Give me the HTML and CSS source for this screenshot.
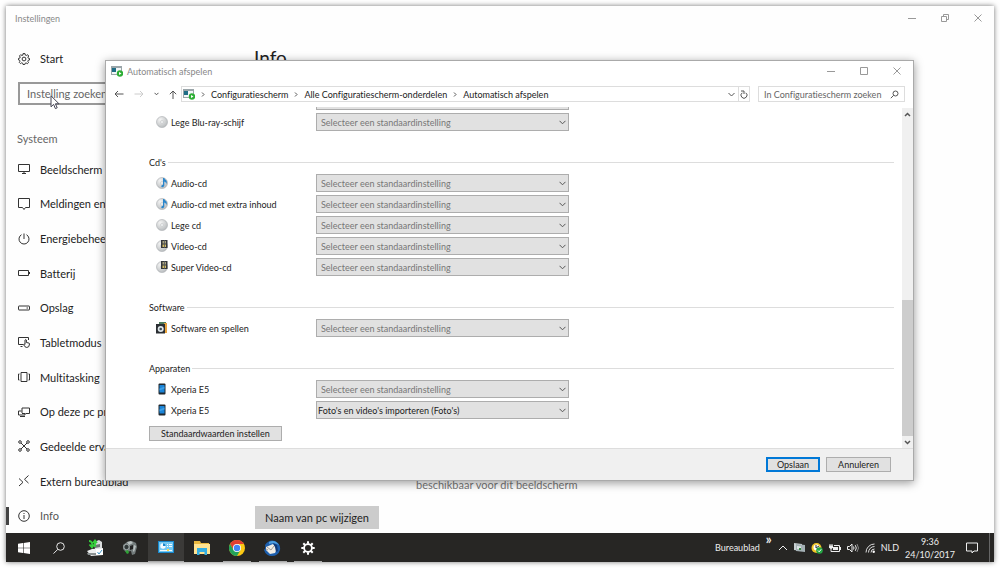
FILE: index.html
```html
<!DOCTYPE html>
<html lang="nl">
<head>
  <meta charset="UTF-8">
  <meta name="viewport" content="width=device-width, initial-scale=1.0">
  <title>Instellingen</title>
  <link rel="stylesheet" href="styles.css">
</head>
<body>
  <div class="screen">
    <div class="settings">
      <header class="settings-title">
        <span>Instellingen</span>
        <div class="window-buttons">
          <button aria-label="Minimaliseren"><svg width="8" height="8" viewBox="0 0 8 8"><path d="M0 4.5h8"/></svg></button>
          <button aria-label="Verkleinen"><svg width="8" height="8" viewBox="0 0 8 8"><path d="M.5 2.5h5v5h-5zM2.5 2.5v-2h5v5h-2"/></svg></button>
          <button aria-label="Sluiten"><svg width="8" height="8" viewBox="0 0 8 8"><path d="M.5.5l7 7M7.500.5l-7 7"/></svg></button>
        </div>
      </header>

      <div class="settings-body">
        <aside class="sidebar">
          <a class="nav-item home" href="#">
            <svg width="12" height="12" viewBox="0 0 12 12"><circle cx="6" cy="6" r="1.900"/><path d="M5 .6h2l.3 1.500 1 .4 1.300-.8 1.100 1.300-.8 1.200.4 1 1.200.3v1.500l-1.300.3-.4 1 .7 1.300-1.200 1.100-1.200-.8-1 .4-.3 1.200H5l-.3-1.300-1-.4-1.200.8-1.200-1.200.7-1.200-.4-1L.5 6.900V5.400l1.300-.3.4-1-.7-1.200 1.200-1.200 1.200.8 1-.4z"/></svg>
            <span>Start</span>
          </a>
          <input class="search" type="text" placeholder="Instelling zoeken" aria-label="Instelling zoeken">
          <h2>Systeem</h2>
          <nav class="nav">
            <a class="nav-item" href="#">
              <svg width="12" height="12" viewBox="0 0 12 12"><path d="M.5 1.500h11v7H.5zM6 8.500v2M4 10.500h4"/></svg>
              <span>Beeldscherm</span>
            </a>
            <a class="nav-item" href="#">
              <svg width="12" height="12" viewBox="0 0 12 12"><path d="M.5.5h11v9H7.500L6 11.500 4.500 9.500h-4z"/></svg>
              <span>Meldingen en acties</span>
            </a>
            <a class="nav-item" href="#">
              <svg width="12" height="12" viewBox="0 0 12 12"><path d="M6 .5V6M3.500 1.700a5 5 0 1 0 5 0"/></svg>
              <span>Energiebeheer</span>
            </a>
            <a class="nav-item" href="#">
              <svg width="12" height="12" viewBox="0 0 12 12"><path d="M.5 3.500h10v5H.5zM11.500 5v2"/></svg>
              <span>Batterij</span>
            </a>
            <a class="nav-item" href="#">
              <svg width="12" height="12" viewBox="0 0 12 12"><path d="M1 4h10q.5 0 .5.500v3q0 .5-.5.500H1q-.5 0-.5-.5v-3Q.5 4 1 4zM8.500 6H10"/></svg>
              <span>Opslag</span>
            </a>
            <a class="nav-item" href="#">
              <svg width="12" height="12" viewBox="0 0 12 12"><path d="M5 8.500H.5v-7h10V4M2.500 10.500h2M7 8.500V4q.7-1 1.400 0v2.500l2.600.6q.5.100.5.900-.100 3.500-2.700 3.500-2 0-3.300-3Q6 7.500 7 8.500z"/></svg>
              <span>Tabletmodus</span>
            </a>
            <a class="nav-item" href="#">
              <svg width="12" height="12" viewBox="0 0 12 12"><path d="M3 1.500h6v9H3zM1.500 3h-1v6h1M10.500 3h1v6h-1"/></svg>
              <span>Multitasking</span>
            </a>
            <a class="nav-item" href="#">
              <svg width="12" height="12" viewBox="0 0 12 12"><path d="M4 7V2h7.500v5.500H7.500M.5 5h3M.5 5v4H7V7.500H4M2 10.500h5"/></svg>
              <span>Op deze pc projecteren</span>
            </a>
            <a class="nav-item" href="#">
              <svg width="12" height="12" viewBox="0 0 12 12"><path d="M3 3l6 6M9 3L3 9"/><circle cx="2" cy="2" r="1.300"/><circle cx="10" cy="2" r="1.300"/><circle cx="2" cy="10" r="1.300"/><circle cx="10" cy="10" r="1.300"/></svg>
              <span>Gedeelde ervaringen</span>
            </a>
            <a class="nav-item" href="#">
              <svg width="12" height="12" viewBox="0 0 12 12"><path d="M1 3.500L5 7.300 1 11M10.500.5L6.500 4.300l4 3.800"/></svg>
              <span>Extern bureaublad</span>
            </a>
            <a class="nav-item current" href="#">
              <svg width="12" height="12" viewBox="0 0 12 12"><circle cx="6" cy="6" r="5.300"/><path d="M6 5v4M6 3v1"/></svg>
              <span>Info</span>
            </a>
          </nav>
        </aside>

        <main class="page">
          <h1>Info</h1>
          <p>beschikbaar voor dit beeldscherm</p>
          <button class="rename">Naam van pc wijzigen</button>
        </main>
      </div>

      <svg class="cursor" width="10" height="15" viewBox="0 0 10 15"><path d="M1 .8v11l2.600-2.400 1.800 4.200 1.800-.8-1.800-4H9z"/></svg>
    </div>

    <section class="dialog">
      <header class="dialog-title">
        <svg width="12" height="11" viewBox="0 0 12 11"><use href="#autoplay"/></svg>
        <span>Automatisch afspelen</span>
        <div class="window-buttons">
          <button aria-label="Minimaliseren"><svg width="8" height="8" viewBox="0 0 8 8"><path d="M0 4.500h8"/></svg></button>
          <button aria-label="Maximaliseren"><svg width="8" height="8" viewBox="0 0 8 8"><path d="M.5.5h7v7h-7z"/></svg></button>
          <button aria-label="Sluiten"><svg width="8" height="8" viewBox="0 0 8 8"><path d="M.5.5l7 7M7.500.5l-7 7"/></svg></button>
        </div>
      </header>

      <div class="toolbar">
        <div class="history">
          <button aria-label="Vorige"><svg width="10" height="8" viewBox="0 0 10 8"><path d="M9.500 4H1M4 1L1 4l3 3"/></svg></button>
          <button class="off" aria-label="Volgende" disabled><svg width="10" height="8" viewBox="0 0 10 8"><path d="M.5 4H9M6 1l3 3-3 3"/></svg></button>
          <button class="recent" aria-label="Recente locaties"><svg width="5" height="4" viewBox="0 0 5 4"><path d="M.5.800l2 2 2-2"/></svg></button>
          <button aria-label="Omhoog"><svg width="8" height="9" viewBox="0 0 8 9"><path d="M4 9V1M.800 4.200L4 1l3.200 3.200"/></svg></button>
        </div>
        <div class="address">
          <svg class="place" width="12" height="11" viewBox="0 0 12 11"><use href="#autoplay"/></svg>
          <svg class="sep" width="4" height="5" viewBox="0 0 4 5"><path d="M1 .5l2 2-2 2"/></svg>
          <a href="#">Configuratiescherm</a>
          <svg class="sep" width="4" height="5" viewBox="0 0 4 5"><path d="M1 .5l2 2-2 2"/></svg>
          <a href="#">Alle Configuratiescherm-onderdelen</a>
          <svg class="sep" width="4" height="5" viewBox="0 0 4 5"><path d="M1 .5l2 2-2 2"/></svg>
          <a href="#">Automatisch afspelen</a>
          <div class="address-buttons">
            <button aria-label="Vorige locaties"><svg width="7" height="5" viewBox="0 0 7 5"><path d="M.5 1l3 3 3-3"/></svg></button>
            <button class="refresh" aria-label="Vernieuwen"><svg width="8" height="9" viewBox="0 0 8 9"><path d="M2.200 2.800a3 3 0 1 0 3.600 0M1 1h3v3"/></svg></button>
          </div>
        </div>
        <label class="find">
          <input type="text" placeholder="In Configuratiescherm zoeken" aria-label="In Configuratiescherm zoeken">
          <svg width="9" height="9" viewBox="0 0 9 9"><circle cx="5.500" cy="3.500" r="2.500"/><path d="M3.700 5.300L.8 8.200"/></svg>
        </label>
      </div>

      <div class="dialog-body">
        <div class="options">
          <div class="group">
            <div class="row">
              <select class="unset" aria-label="Blu-ray"><option></option></select>
            </div>
            <div class="row">
              <label for="bluray"><svg width="12" height="12" viewBox="0 0 12 12"><use href="#disc"/></svg>Lege Blu-ray-schijf</label>
              <select class="unset" id="bluray"><option>Selecteer een standaardinstelling</option></select>
            </div>
          </div>

          <div class="group">
            <h3>Cd's</h3>
            <div class="row">
              <label for="audio"><svg width="12" height="12" viewBox="0 0 12 12"><use href="#disc"/><use href="#note"/></svg>Audio-cd</label>
              <select class="unset" id="audio"><option>Selecteer een standaardinstelling</option></select>
            </div>
            <div class="row">
              <label for="audio-extra"><svg width="12" height="12" viewBox="0 0 12 12"><use href="#disc"/><use href="#note"/></svg>Audio-cd met extra inhoud</label>
              <select class="unset" id="audio-extra"><option>Selecteer een standaardinstelling</option></select>
            </div>
            <div class="row">
              <label for="blank"><svg width="12" height="12" viewBox="0 0 12 12"><use href="#disc"/></svg>Lege cd</label>
              <select class="unset" id="blank"><option>Selecteer een standaardinstelling</option></select>
            </div>
            <div class="row">
              <label for="video"><svg width="12" height="12" viewBox="0 0 12 12"><use href="#disc"/><use href="#film"/></svg>Video-cd</label>
              <select class="unset" id="video"><option>Selecteer een standaardinstelling</option></select>
            </div>
            <div class="row">
              <label for="super-video"><svg width="12" height="12" viewBox="0 0 12 12"><use href="#disc"/><use href="#film"/></svg>Super Video-cd</label>
              <select class="unset" id="super-video"><option>Selecteer een standaardinstelling</option></select>
            </div>
          </div>

          <div class="group">
            <h3>Software</h3>
            <div class="row">
              <label for="software"><svg width="12" height="12" viewBox="0 0 12 12"><path fill="#4d7a5c" d="M3 0h7v4H3z"/><path fill="#e8a33c" d="M8 1h3v10H8z"/><path fill="#2b2f33" d="M0 2h9v9.500H0z"/><circle cx="4.700" cy="7" r="3" fill="#dfe6ea"/><circle cx="4.700" cy="7" r="1.300" fill="#3d4a52"/></svg>Software en spellen</label>
              <select class="unset" id="software"><option>Selecteer een standaardinstelling</option></select>
            </div>
          </div>

          <div class="group">
            <h3>Apparaten</h3>
            <div class="row">
              <label for="xperia-1"><svg width="12" height="12" viewBox="0 0 12 12"><use href="#phone"/></svg>Xperia E5</label>
              <select class="unset" id="xperia-1"><option>Selecteer een standaardinstelling</option></select>
            </div>
            <div class="row">
              <label for="xperia-2"><svg width="12" height="12" viewBox="0 0 12 12"><use href="#phone"/></svg>Xperia E5</label>
              <select id="xperia-2"><option>Foto's en video's importeren (Foto's)</option></select>
            </div>
          </div>

          <button class="push defaults">Standaardwaarden instellen</button>
        </div>

        <div class="scrollbar">
          <button aria-label="Omhoog schuiven"><svg width="7" height="5" viewBox="0 0 7 5"><path d="M1 4l2.500-2.500L6 4"/></svg></button>
          <div class="track"><div class="thumb"></div></div>
          <button aria-label="Omlaag schuiven"><svg width="7" height="5" viewBox="0 0 7 5"><path d="M1 1l2.500 2.500L6 1"/></svg></button>
        </div>
      </div>

      <footer class="dialog-footer">
        <button class="push primary">Opslaan</button>
        <button class="push">Annuleren</button>
      </footer>
    </section>

    <footer class="taskbar">
      <div class="apps">
        <button aria-label="Start"><svg width="12" height="12" viewBox="0 0 12 12"><path fill="#fff" d="M0 1.700l5-.7v4.700H0zM5.600.900L12 0v5.700H5.600zM0 6.300h5V11l-5-.7zM5.600 6.300H12V12l-6.400-.9z"/></svg></button>
        <button aria-label="Zoeken"><svg width="12" height="12" viewBox="0 0 12 12"><g fill="none" stroke="#e8e8e8"><circle cx="7.500" cy="4.500" r="3.800"/><path d="M4.800 7.300L.5 11.600"/></g></svg></button>
        <button aria-label="Scanner"><svg width="18" height="18" viewBox="0 0 18 18"><path fill="#d9dcdc" d="M8 3l5-2 3 2v7H9z"/><path fill="#6d7474" d="M9 6l5-1v3l-5 1z"/><path fill="#eef0f0" d="M1 12l5-2 11-1v7l-12 1z"/><path fill="#8c9292" d="M1 14h9v2H2z"/><path fill="#fff" d="M10 10h7v6h-7z"/><path d="M11.500 13l1.500 2 3-4" fill="none" stroke="#4398c8"/><path d="M3 2q4 0 3 6M3.500 5.500L6 8.500l2-3M9 8V2M7 4l2-2.500L11 4" fill="none" stroke="#35cf3c" stroke-width="1.800"/></svg></button>
        <button aria-label="Camera"><svg width="16" height="16" viewBox="0 0 16 16"><path fill="#737b7b" d="M1 5l4-3 5-1 4 2 1 4-2 7-3 1-1-4-5 1-3-3z"/><path fill="#b9c0c0" d="M5 2l4-1 2 2-4 2zM12 5l2 1-2 6-1-1z"/><circle cx="4.500" cy="7" r="2.700" fill="#303737" stroke="#a5adad"/><path fill="#222" d="M8 6l3-1v4l-3 1z"/><path fill="#2fa336" d="M3 11l3-1 1 3-2 1z"/></svg></button>
        <button class="active" aria-label="Configuratiescherm"><svg width="16" height="12" viewBox="0 0 16 12"><path fill="#1787cc" d="M0 0h16v12H0z"/><path fill="#74c9f3" d="M1 1h14v10H1z"/><circle cx="5" cy="5" r="2.700" fill="#f5fbff"/><path fill="#1787cc" d="M5 5V2.300A2.700 2.700 0 0 1 7.700 5z"/><path fill="#f5fbff" d="M9 3h1v1H9zM11 3h3v1h-3zM9 5h1v1H9zM11 5h3v1h-3zM2 9h12v1H2z"/><path fill="#ffd94f" d="M9 8h2v2H9z"/></svg></button>
        <button aria-label="Verkenner"><svg width="16" height="14" viewBox="0 0 16 14"><path fill="#e9b840" d="M0 0h6l1 2h8v4H0z"/><path fill="#ffe392" d="M0 3h16v10H0z"/><path fill="#35aee2" d="M3 7h10v7h-2.500v-3h-5v3H3z"/></svg></button>
        <button class="open" aria-label="Chrome"><svg width="16" height="16" viewBox="0 0 16 16"><circle cx="8" cy="8" r="8" fill="#fbc813"/><path fill="#e03f31" d="M1.070 4A8 8 0 0 1 14.930 4H8L4.500 10z"/><path fill="#22a25a" d="M1.070 4A8 8 0 0 0 8 16l3.500-6-3.500 2-3.500-2z"/><circle cx="8" cy="8" r="4" fill="#fff"/><circle cx="8" cy="8" r="3.200" fill="#4285f4"/></svg></button>
        <button class="open" aria-label="Thunderbird"><svg width="17" height="16" viewBox="0 0 17 16"><path fill="#1d5fae" d="M1 5q4-6 10-4 6 3 5 9-2 6-8 6-6 0-8-6 2-2 1-5z"/><path fill="#4d9ee0" d="M5 2q6-3 10 3-5-3-10-1z"/><path fill="#f0ede6" d="M2 7l7-3 4 5-2 4-5 1-4-4z"/><path d="M3 7l4 3 3-4M2 9l2 1" fill="none" stroke="#8e8a88" stroke-width=".8"/><path fill="#123a78" d="M9 3l4 2 1 6-2 1-1-5z"/></svg></button>
        <button class="open" aria-label="Instellingen"><svg width="14" height="14" viewBox="0 0 14 14"><circle cx="7" cy="7" r="3.900" fill="none" stroke="#fff" stroke-width="1.800"/><path d="M7 .3v2.500M7 11.200v2.500M.3 7h2.500M11.200 7h2.500M2.300 2.300l1.700 1.700M10 10l1.700 1.700M2.300 11.700L4 10M10 4l1.700-1.700" stroke="#fff" stroke-width="2"/></svg></button>
      </div>

      <div class="tray">
        <span class="desktop-label">Bureaublad</span>
        <span class="more">»</span>
        <svg width="10" height="6" viewBox="0 0 10 6"><path d="M1 5l4-4 4 4" fill="none" stroke="#eee"/></svg>
        <svg width="11" height="10" viewBox="0 0 11 10"><path fill="#c9d0d2" d="M0 0l8 1v7l-8-1z"/><path fill="#a4b0b4" d="M2 1l9 1v7l-9-1z"/><path fill="#dfe6e6" d="M3 3l4 .5v3L3 6z"/><path fill="#35883f" d="M5 5h2v2H5z"/></svg>
        <svg width="12" height="12" viewBox="0 0 12 12"><circle cx="5.500" cy="6" r="5" fill="#f3c526"/><circle cx="5.500" cy="5.500" r="3" fill="#fff"/><path d="M5 3v3l3-2" fill="none" stroke="#333"/><circle cx="8.500" cy="8.500" r="3.300" fill="#25a544"/><path d="M7 8.500l1.200 1.300 2-2.500" fill="none" stroke="#fff"/></svg>
        <svg width="12" height="8" viewBox="0 0 12 8"><path d="M1 0v2M3 0v2" stroke="#eee"/><path fill="#eee" d="M0 1.500h4v2L2.500 5h-1L0 3.500z"/><path d="M2 5v2.500h8.500v-6H5M11.500 3v3" fill="none" stroke="#eee"/><path fill="#eee" d="M4 3h5v3H4z"/></svg>
        <svg width="12" height="10" viewBox="0 0 12 10"><path d="M.5 3.500h2L5 1v8L2.500 6.500h-2zM6.500 3.500q1 1.500 0 3M8.300 2.200q2 2.800 0 5.600" fill="none" stroke="#eee"/><path d="M10 1q3 4 0 8" fill="none" stroke="#888"/></svg>
        <svg width="10" height="10" viewBox="0 0 10 10"><g fill="none" stroke="#ddd"><path d="M1 9.500A8.500 8.500 0 0 1 9.500 1M3.500 9.500a6 6 0 0 1 6-6M6 9.500A3.500 3.500 0 0 1 9.500 6"/></g><circle cx="8.700" cy="8.700" r="1.200" fill="#fff"/></svg>
        <span class="language">NLD</span>
        <div class="clock"><span>9:36</span><span>24/10/2017</span></div>
        <button class="actions" aria-label="Actiecentrum"><svg width="12" height="12" viewBox="0 0 12 12"><path d="M.5 1h11v8H8l-2 2V9H.5z" fill="none" stroke="#eee"/></svg></button>
        <button class="show-desktop" aria-label="Bureaublad weergeven"></button>
      </div>
    </footer>
  </div>

  <!-- shared icons -->
  <svg class="sprites" width="0" height="0" aria-hidden="true">
    <defs>
      <radialGradient id="silver" cx=".35" cy=".3" r=".8">
        <stop offset="0" stop-color="#f4f4f4"/>
        <stop offset="1" stop-color="#b4b8ba"/>
      </radialGradient>
      <g id="autoplay">
        <path fill="#9aa5a9" d="M0 0h11v9H0z"/>
        <path fill="#f3f6f7" d="M1 2h9v6H1z"/>
        <path fill="#1f6d86" d="M1 2h4v4H1z"/>
        <circle cx="9" cy="7.500" r="3.200" fill="#2eae35"/>
        <path fill="#fff" d="M8 6l2.500 1.500L8 9z"/>
      </g>
      <g id="disc">
        <circle cx="6" cy="6" r="5.500" fill="url(#silver)" stroke="#a9adb0" stroke-width=".6"/>
        <circle cx="6" cy="6" r="1.600" fill="#e9ebec" stroke="#c2c5c7" stroke-width=".5"/>
      </g>
      <g id="note">
        <path fill="#2b86cb" d="M7 1h1.300q.3 1.500 2 2.300 1.200 1.500 0 3.700 0-2-2-2.500v4Q8 10.500 6 10.300 4.500 9.500 5.700 8.200 6.500 7.700 7 7.800z"/>
      </g>
      <g id="film">
        <path fill="#34373b" d="M5 0h6.500v8H5z"/>
        <path fill="#a8a27e" d="M6.500 1H10v2.500H6.500z"/>
        <path fill="#d4bd62" d="M6.500 4.500H10V7H6.500z"/>
        <path fill="#55595e" d="M8 0h.8v8H8z"/>
      </g>
      <g id="phone">
        <rect x="2.500" y=".5" width="7" height="11" rx="1" fill="#20282e"/>
        <path fill="#1a84d8" d="M3.500 2h5v7.500h-5z"/>
        <path fill="#3d9fe6" d="M3.500 5.500l5-2v2l-5 2z"/>
      </g>
    </defs>
  </svg>
</body>
</html>
```

FILE: styles.css
```css
* {
  box-sizing: border-box;
}

body {
  margin: 0;
  padding: 6px;
  height: 100vh;
  background: #fff;
  font-family: Lato, "Open Sans", sans-serif;
  font-size: 9px;
  font-variant-ligatures: none;
  color: #222;
}

h1, h2, h3, p {
  margin: 0;
  font-weight: normal;
}

a {
  color: inherit;
  text-decoration: none;
}

button, input, select {
  font: inherit;
  font-variant-ligatures: none;
  color: inherit;
  margin: 0;
  padding: 0;
  border: none;
  background: none;
}

svg {
  flex: none;
  display: block;
}

.sprites {
  position: absolute;
}

.screen {
  position: relative;
  height: 100%;
  display: flex;
  flex-direction: column;
  box-shadow: 0 0 5px rgba(0, 0, 0, 0.55);
}

/* settings window */
.settings {
  position: relative;
  flex: 1;
  min-height: 0;
  display: flex;
  flex-direction: column;
  background: #fefefe;
}

.settings-title {
  display: flex;
  align-items: center;
  justify-content: space-between;
  height: 24px;
  padding-left: 9px;
  color: #8a8a8a;
}

.window-buttons {
  display: flex;
}

.window-buttons button {
  width: 33px;
  height: 20px;
  display: flex;
  align-items: center;
  justify-content: center;
}

.window-buttons svg {
  fill: none;
  stroke: #999;
}

.settings-body {
  flex: 1;
  min-height: 0;
  display: flex;
}

.sidebar {
  width: 240px;
  display: flex;
  flex-direction: column;
}

.nav {
  flex: 1;
  display: grid;
  grid-auto-rows: 1fr;
}

.nav-item {
  display: flex;
  align-items: center;
  gap: 10px;
  padding-left: 12px;
  font-size: 11px;
  white-space: nowrap;
}

.nav-item svg {
  fill: none;
  stroke: #333;
}

.home {
  height: 57px;
}

.search {
  height: 23px;
  margin: -5px 12px 0;
  padding: 0 7px;
  border: 2px solid #999;
  font-size: 11px;
}

.search::placeholder {
  color: #666;
  opacity: 1;
}

.sidebar h2 {
  padding: 26px 11px 5px;
  font-size: 11px;
  line-height: 16px;
  color: #666;
}

.current {
  color: #555;
  background: linear-gradient(#444, #444) 0 center / 3px 18px no-repeat;
}

.page {
  flex: 1;
  display: flex;
  flex-direction: column;
  align-items: flex-start;
  padding: 14px 8px 4px;
}

.page h1 {
  font-size: 19px;
  line-height: 28px;
}

.page p {
  margin: auto 0 13px 162px;
  font-size: 11px;
  line-height: 16px;
  color: #777;
}

.rename {
  height: 23px;
  margin-left: 1px;
  padding: 0 10px;
  background: #ccc;
  font-size: 11px;
}

.cursor {
  position: absolute;
  left: 44px;
  top: 89px;
  fill: #fff;
  stroke: #445;
}

/* autoplay window */
.dialog {
  position: absolute;
  top: 54px;
  right: 80px;
  bottom: 81px;
  left: 99px;
  display: flex;
  flex-direction: column;
  background: #fff;
  border: 1px solid #aaa;
  box-shadow: 0 2px 9px rgba(0, 0, 0, 0.4);
}

.dialog-title {
  display: flex;
  align-items: center;
  gap: 4px;
  height: 20px;
  padding-left: 5px;
  color: #888;
}

.dialog-title .window-buttons {
  margin-left: auto;
}

.toolbar {
  display: flex;
  gap: 8px;
  height: 26px;
  padding: 5px 8px;
}

.history {
  display: flex;
  align-items: center;
  gap: 10px;
  margin-right: -4px;
}

.toolbar svg {
  fill: none;
  stroke: #555;
}

.history .off svg {
  stroke: #ccc;
}

.toolbar .place {
  stroke: none;
  margin-left: 1px;
}

.address {
  flex: 1;
  display: flex;
  align-items: center;
  gap: 6px;
  border: 1px solid #ddd;
}

.address-buttons {
  align-self: stretch;
  margin-left: auto;
  display: flex;
  gap: 3px;
}

.refresh {
  padding: 0 1px;
  border-left: 1px solid #ddd;
}

.find {
  width: 147px;
  display: flex;
  align-items: center;
  padding: 0 5px;
  border: 1px solid #ddd;
}

.find input {
  flex: 1;
  min-width: 0;
}

.find input::placeholder {
  color: #666;
  opacity: 1;
}

.dialog-body {
  flex: 1;
  min-height: 0;
  display: flex;
}

.options {
  flex: 1;
  min-width: 0;
  display: flex;
  flex-direction: column;
  justify-content: flex-end;
  gap: 22px;
  padding: 0 8px 7px 43px;
  overflow: hidden;
}

.group {
  display: flex;
  flex-direction: column;
  gap: 3px;
}

.group h3 {
  display: flex;
  align-items: center;
  gap: 2px;
  height: 18px;
  font-size: 9px;
}

.group h3::after {
  content: "";
  flex: 1;
  border-top: 1px solid #ddd;
}

.row {
  display: grid;
  grid-template-columns: 160px 253px;
  height: 18px;
  padding-left: 7px;
}

.row label {
  display: flex;
  align-items: center;
  gap: 3px;
}

.row select {
  grid-column: 2;
  appearance: none;
  padding: 0 14px 0 1px;
  border: 1px solid #adadad;
  background: #e1e1e1 url("data:image/svg+xml,%3Csvg xmlns='http://www.w3.org/2000/svg' width='7' height='5'%3E%3Cpath d='M.5.8l3 3 3-3' fill='none' stroke='%23555'/%3E%3C/svg%3E") right 2px center no-repeat;
}

.row .unset {
  padding-left: 4px;
  color: #777;
}

.push {
  flex: none;
  height: 15px;
  padding: 0 11px;
  border: 1px solid #adadad;
  background: #e1e1e1;
}

.defaults {
  align-self: flex-start;
  margin-top: -15px;
}

.scrollbar {
  width: 11px;
  margin-top: 1px;
  display: flex;
  flex-direction: column;
  background: #f0f0f0;
}

.scrollbar button {
  height: 12px;
  display: flex;
  align-items: center;
  justify-content: center;
}

.scrollbar svg {
  fill: none;
  stroke: #555;
  stroke-width: 1.5;
}

.track {
  flex: 1;
  display: flex;
  flex-direction: column;
  justify-content: flex-end;
}

.thumb {
  height: 43%;
  background: #cdcdcd;
}

.dialog-footer {
  display: flex;
  align-items: center;
  justify-content: flex-end;
  gap: 6px;
  height: 32px;
  padding-right: 22px;
  background: #f0f0f0;
  border-top: 1px solid #ddd;
}

.primary {
  padding: 0 9px;
  border: 2px solid #0078d7;
}

/* taskbar */
.taskbar {
  display: flex;
  justify-content: space-between;
  height: 29px;
  background: #272624;
  color: #eee;
}

.apps {
  width: 320px;
  display: grid;
  grid-template-columns: repeat(9, 1fr);
}

.apps button {
  display: flex;
  align-items: center;
  justify-content: center;
}

.apps .active {
  background: #3b3a38;
  border-bottom: 1px solid #aaa;
}

.apps .open {
  background: linear-gradient(#aaa, #aaa) center bottom / 28px 1px no-repeat;
}

.tray {
  display: flex;
  align-items: center;
  gap: 6px;
}

.more {
  align-self: flex-start;
  font-size: 13px;
  font-weight: bold;
  line-height: 13px;
}

.clock {
  display: flex;
  flex-direction: column;
  align-items: center;
  line-height: 13px;
}

.actions {
  margin: 0 5px;
}

.show-desktop {
  align-self: stretch;
  width: 5px;
  border-left: 1px solid #666;
}
```
